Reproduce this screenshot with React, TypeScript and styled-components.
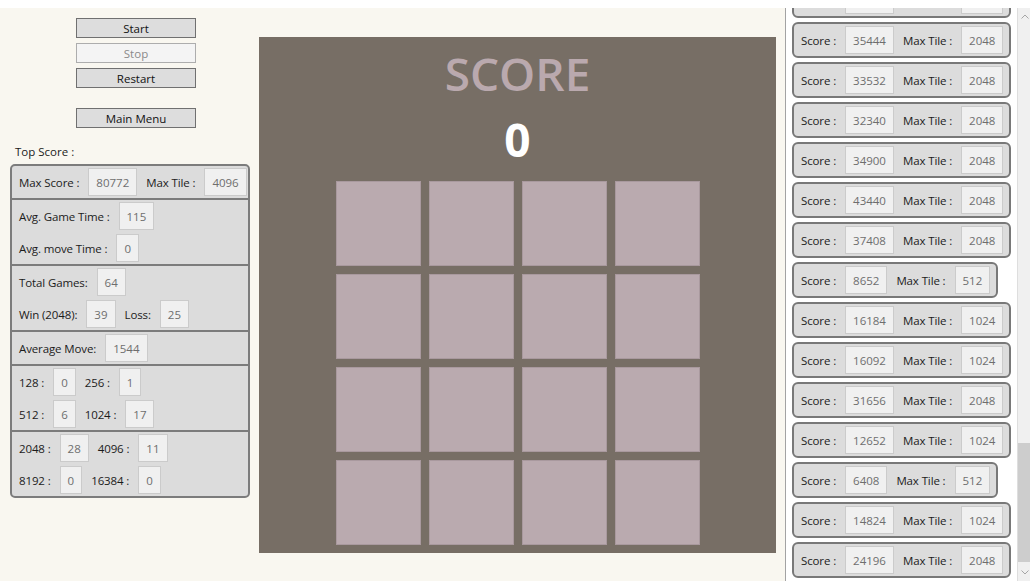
import React from "react";
import styled, { createGlobalStyle } from "styled-components";

const Global = createGlobalStyle`
  html, body { margin: 0; padding: 0; background: #ffffff; overflow: hidden; }
  body { font-family: "Open Sans", "Noto Sans", sans-serif; font-size: 11.5px; color: #1b1b1b; }
  * { box-sizing: border-box; }
`;

const Page = styled.div`
  width: 1030px;
  height: 581px;
  display: flex;
  flex-direction: column;
`;

const TopStrip = styled.div`
  height: 8px;
  background: #ffffff;
  flex: none;
`;

const Main = styled.div`
  flex: 1;
  min-height: 0;
  display: flex;
`;

const Workspace = styled.div`
  width: 785px;
  flex: none;
  background: #f9f7f0;
  display: flex;
`;

const Sidebar = styled.div`
  width: 259px;
  flex: none;
  display: flex;
  flex-direction: column;
  padding-top: 10px;
`;

const Button = styled.div<{ $disabled?: boolean; $gap?: number }>`
  width: 120px;
  height: 20px;
  margin-left: 76px;
  margin-top: ${(p) => p.$gap ?? 0}px;
  display: flex;
  align-items: center;
  justify-content: center;
  background: ${(p) => (p.$disabled ? "#f4f4f4" : "#dddddd")};
  border: 1px solid ${(p) => (p.$disabled ? "#adadad" : "#707070")};
  color: ${(p) => (p.$disabled ? "#8a8a8a" : "#111111")};
  font-size: 11.5px;
`;

const SectionTitle = styled.div`
  margin-top: 12px;
  height: 24px;
  line-height: 24px;
  padding-left: 15px;
`;

const StatsPanel = styled.div`
  margin-left: 10px;
  width: 240px;
  border: 2px solid #7c7c7c;
  border-radius: 5px;
  background: #dcdcdc;
  overflow: hidden;
`;

const StatsSection = styled.div`
  display: flex;
  flex-direction: column;
  gap: 4px;
  padding: 2px;
  & + & {
    border-top: 2px solid #7c7c7c;
  }
`;

const Row = styled.div`
  display: flex;
  align-items: center;
  height: 28px;
`;

const Label = styled.span`
  padding: 0 5px;
  white-space: nowrap;
  letter-spacing: -0.12px;
`;

const Value = styled.span`
  height: 28px;
  margin: 0 4px;
  padding: 0 7px;
  display: flex;
  align-items: center;
  background: #f0f0f0;
  border: 1px solid #cbcbcb;
  color: #6e6e6e;
`;

const Text = styled.span<{ $ghost?: boolean }>`
  visibility: ${(p) => (p.$ghost ? "hidden" : "visible")};
`;

const Board = styled.div`
  width: 517px;
  height: 516px;
  margin-top: 29px;
  background: #776e65;
  display: flex;
  flex-direction: column;
  align-items: center;
`;

const ScoreTitle = styled.div`
  margin-top: 6px;
  height: 60px;
  line-height: 60px;
  font-size: 46px;
  font-weight: 600;
  color: #baa9ae;
`;

const ScoreValue = styled.div`
  margin-top: 8px;
  height: 56px;
  line-height: 56px;
  font-size: 46px;
  font-weight: 700;
  color: #ffffff;
`;

const Grid = styled.div`
  margin-top: 14px;
  display: grid;
  grid-template-columns: repeat(4, 85px);
  grid-auto-rows: 85px;
  gap: 8px;
`;

const Tile = styled.div`
  background: #baaaaf;
  border: 1px solid #a9999e;
`;

const ListPane = styled.div`
  width: 232px;
  flex: none;
  border-left: 1px solid #a3a3a3;
  background: #ffffff;
  overflow: hidden;
  padding-left: 6px;
`;

const CardStack = styled.div`
  margin-top: -26px;
  display: flex;
  flex-direction: column;
  align-items: flex-start;
  gap: 4px;
`;

const Card = styled.div`
  display: inline-flex;
  align-items: center;
  padding: 2px;
  border: 2px solid #787878;
  border-radius: 6px;
  background: #dcdcdc;
`;

const ScrollBar = styled.div`
  width: 13px;
  flex: none;
  background: #f0f0f0;
  border-left: 1px solid #dedede;
  display: flex;
  flex-direction: column;
`;

const ArrowCell = styled.div`
  height: 17px;
  flex: none;
  display: flex;
  align-items: center;
  padding-left: 3px;
`;

const Track = styled.div`
  flex: 1;
  display: flex;
  flex-direction: column;
`;

const Thumb = styled.div`
  height: 119px;
  background: #cdcdcd;
`;

type Game = { score: string; tile: string };

const games: Game[] = [
  { score: "30124", tile: "2048" },
  { score: "35444", tile: "2048" },
  { score: "33532", tile: "2048" },
  { score: "32340", tile: "2048" },
  { score: "34900", tile: "2048" },
  { score: "43440", tile: "2048" },
  { score: "37408", tile: "2048" },
  { score: "8652", tile: "512" },
  { score: "16184", tile: "1024" },
  { score: "16092", tile: "1024" },
  { score: "31656", tile: "2048" },
  { score: "12652", tile: "1024" },
  { score: "6408", tile: "512" },
  { score: "14824", tile: "1024" },
  { score: "24196", tile: "2048" },
];

type Pair = [string, string];
const sections: Pair[][][] = [
  [[["Max Score :", "80772"], ["Max Tile :", "4096"]]],
  [[["Avg. Game Time :", "115"]], [["Avg. move Time :", "0"]]],
  [[["Total Games:", "64"]], [["Win (2048):", "39"], ["Loss:", "25"]]],
  [[["Average Move:", "1544"]]],
  [[["128 :", "0"], ["256 :", "1"]], [["512 :", "6"], ["1024 :", "17"]]],
  [[["2048 :", "28"], ["4096 :", "11"]], [["8192 :", "0"], ["16384 :", "0"]]],
];

const Chevron = ({ up }: { up?: boolean }) => (
  <svg width="8" height="5" viewBox="0 0 8 5">
    <polyline
      points={up ? "0.5,4.5 4,1 7.5,4.5" : "0.5,0.5 4,4 7.5,0.5"}
      fill="none"
      stroke="#a6a6a6"
      strokeWidth="1"
    />
  </svg>
);

export default function App() {
  const thumbTop = 418;
  return (
    <Page>
      <Global />
      <TopStrip />
      <Main>
        <Workspace>
          <Sidebar>
            <Button>Start</Button>
            <Button $disabled $gap={5}>Stop</Button>
            <Button $gap={5}>Restart</Button>
            <Button $gap={20}>Main Menu</Button>
            <SectionTitle>Top Score :</SectionTitle>
            <StatsPanel>
              {sections.map((rows, si) => (
                <StatsSection key={si}>
                  {rows.map((pairs, ri) => (
                    <Row key={ri}>
                      {pairs.map(([l, v]) => (
                        <React.Fragment key={l}>
                          <Label>{l}</Label>
                          <Value>{v}</Value>
                        </React.Fragment>
                      ))}
                    </Row>
                  ))}
                </StatsSection>
              ))}
            </StatsPanel>
          </Sidebar>
          <Board>
            <ScoreTitle>SCORE</ScoreTitle>
            <ScoreValue>0</ScoreValue>
            <Grid>
              {Array.from({ length: 16 }).map((_, i) => (
                <Tile key={i} />
              ))}
            </Grid>
          </Board>
        </Workspace>
        <ListPane>
          <CardStack>
            {games.map((g, i) => (
              <Card key={i}>
                <Label>
                  <Text $ghost={i === 0}>Score :</Text>
                </Label>
                <Value>
                  <Text $ghost={i === 0}>{g.score}</Text>
                </Value>
                <Label>
                  <Text $ghost={i === 0}>Max Tile :</Text>
                </Label>
                <Value>
                  <Text $ghost={i === 0}>{g.tile}</Text>
                </Value>
              </Card>
            ))}
          </CardStack>
        </ListPane>
        <ScrollBar>
          <ArrowCell>
            <Chevron up />
          </ArrowCell>
          <Track>
            <div style={{ height: thumbTop }} />
            <Thumb />
          </Track>
          <ArrowCell>
            <Chevron />
          </ArrowCell>
        </ScrollBar>
      </Main>
    </Page>
  );
}
